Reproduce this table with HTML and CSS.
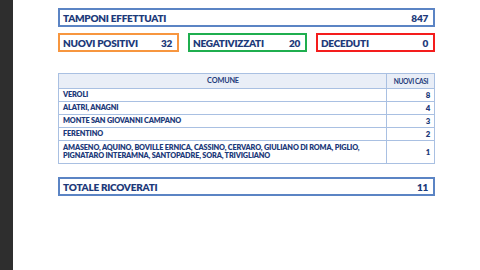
FILE: index.html
```html
<!DOCTYPE html>
<html lang="it">
<head>
<meta charset="utf-8">
<title>Tamponi</title>
<link rel="stylesheet" href="styles.css">
</head>
<body>
<div class="page">
  <div class="strip"></div>
  <main class="content">
    <div class="box box-blue">
      <span>TAMPONI EFFETTUATI</span><span>847</span>
    </div>
    <div class="trio">
      <div class="box box-orange"><span>NUOVI POSITIVI</span><span>32</span></div>
      <div class="box box-green"><span>NEGATIVIZZATI</span><span>20</span></div>
      <div class="box box-red"><span>DECEDUTI</span><span>0</span></div>
    </div>
    <table class="cases">
      <thead>
        <tr><th class="c-name">COMUNE</th><th class="c-num">NUOVI CASI</th></tr>
      </thead>
      <tbody>
        <tr><td>VEROLI</td><td class="num">8</td></tr>
        <tr><td>ALATRI, ANAGNI</td><td class="num">4</td></tr>
        <tr><td>MONTE SAN GIOVANNI CAMPANO</td><td class="num">3</td></tr>
        <tr><td>FERENTINO</td><td class="num">2</td></tr>
        <tr class="tall"><td>AMASENO, AQUINO, BOVILLE ERNICA, CASSINO, CERVARO, GIULIANO DI ROMA, PIGLIO,<br>PIGNATARO INTERAMNA, SANTOPADRE, SORA, TRIVIGLIANO</td><td class="num">1</td></tr>
      </tbody>
    </table>
    <div class="box box-blue total">
      <span>TOTALE RICOVERATI</span><span>11</span>
    </div>
  </main>
</div>
</body>
</html>
```
FILE: styles.css
```css
html, body {
  margin: 0;
  padding: 0;
  background: #ffffff;
}
body {
  width: 480px;
  height: 270px;
  overflow: hidden;
  font-family: Lato, "Open Sans", sans-serif;
  font-weight: 800;
  color: #1d3a7a;
}
.page {
  display: flex;
  height: 270px;
}
.strip {
  width: 13px;
  flex: none;
  background: #2e2e2e;
}
.content {
  margin-left: 45px;
  width: 377px;
  padding-top: 8px;
  display: flex;
  flex-direction: column;
}
.box {
  box-sizing: border-box;
  height: 19px;
  border: 2px solid #5b84c4;
  display: flex;
  justify-content: space-between;
  align-items: center;
  padding: 0 5px 0 3px;
  font-size: 10px;
  letter-spacing: -0.25px;
  background: #fff;
}
.trio {
  margin-top: 6px;
  display: grid;
  grid-template-columns: 121px 119px 119px;
  column-gap: 9px;
}
.box-orange { border-color: #f7963f; }
.box-green { border-color: #1fae4f; }
.box-red { border-color: #f41d1d; }
.cases {
  margin-top: 21px;
  border-collapse: collapse;
  width: 377px;
  font-size: 7.3px;
  letter-spacing: -0.15px;
}
.cases th, .cases td {
  border: 1px solid #a9c0e2;
  padding: 0 3px 0 4px;
  height: 12px;
  line-height: 8px;
  text-align: left;
}
.cases th {
  background: #e9eef7;
  height: 14px;
  text-align: center;
  font-size: 7.3px;
}
.cases .c-num {
  width: 40px;
  font-size: 6.6px;
  letter-spacing: -0.35px;
}
.cases td.num {
  text-align: right;
  padding-right: 4px;
  font-size: 7.8px;
}
.cases tr.tall td {
  height: 22px;
}
.total {
  margin-top: 13px;
}
```
